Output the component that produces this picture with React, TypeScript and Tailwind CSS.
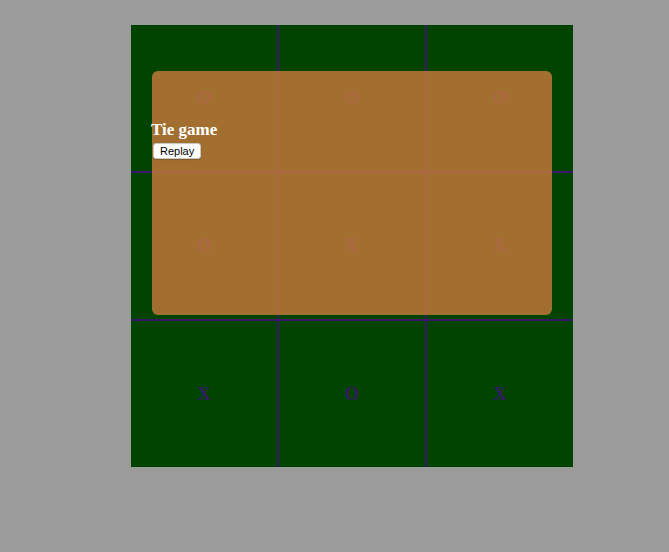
import React from 'react';

const cells = ['O', 'O', 'O', 'O', 'X', 'X', 'X', 'O', 'X'];

export default function App() {
  return (
    <div className="min-h-[552px] w-full bg-[#9b9b9b] pt-[25px] pl-[131px]">
      <div className="relative h-[442px] w-[442px]">
        {/* board */}
        <div className="grid h-full w-full grid-cols-[146px_146px_146px] grid-rows-[146px_146px_146px] gap-[2px] bg-[#3a1868]">
          {cells.map((c, i) => (
            <div
              key={i}
              className="flex items-center justify-center bg-[#004400] text-[18px] font-bold text-[#3a1868] [font-family:'Liberation_Serif',serif]"
            >
              {c}
            </div>
          ))}
        </div>

        {/* game over overlay */}
        <div className="absolute left-[21px] top-[46px] h-[244px] w-[400px] rounded-md bg-[rgba(204,122,60,0.8)]">
          <div className="-ml-px pt-[49px]">
            <div className="text-[17px] leading-[20px] font-bold text-white [font-family:'Liberation_Serif',serif]">
              Tie game
            </div>
            <button className="ml-[2px] mt-[3px] flex h-[16px] items-center rounded-[3px] border border-[#c8c8c8] bg-white px-[6px] text-[11px] leading-none text-black shadow-[0_1px_1px_rgba(0,0,0,0.2)] [font-family:'Liberation_Sans',sans-serif]">
              Replay
            </button>
          </div>
        </div>
      </div>
    </div>
  );
}
